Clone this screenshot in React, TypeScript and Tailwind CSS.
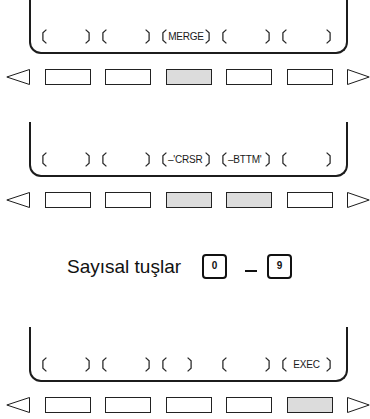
type Pair = { label?: string; w?: number; left?: boolean };

const ink = "border-[#1c1c1c]";

function HalfBracket({ flip }: { flip?: boolean }) {
  return (
    <svg width="5" height="15" viewBox="0 0 5 15" className="shrink-0">
      <path
        d={flip ? "M0.6 0.6 L4.1 3.8 L4.1 11.2 L0.6 14.4" : "M4.4 0.6 L0.9 3.8 L0.9 11.2 L4.4 14.4"}
        fill="none"
        stroke="#262626"
        strokeWidth="1.25"
      />
    </svg>
  );
}

function BracketRow({ pairs }: { pairs: Pair[] }) {
  return (
    <div className="grid grid-cols-[48px_48px_48px_48px_49px] gap-x-[12px] pl-[11px]">
      {pairs.map((p, i) => (
        <div
          key={i}
          className={`flex h-[15px] items-center ${p.left ? "justify-start" : "justify-between"}`}
          style={p.w ? { width: p.w } : undefined}
        >
          <HalfBracket />
          {p.label && (
            <span
              className={`text-[10px] leading-none tracking-[-0.2px] text-[#1a1a1a] ${
                p.left ? "ml-[1px]" : ""
              }`}
            >
              {p.label}
            </span>
          )}
          <span className={p.left ? "ml-auto flex" : "flex"}>
            <HalfBracket flip />
          </span>
        </div>
      ))}
    </div>
  );
}

function Screen({ pairs, top = true }: { pairs: Pair[]; top?: boolean }) {
  return (
    <div
      className={`ml-[29px] flex w-[319px] flex-col justify-end rounded-b-[12px] border-x-2 border-b-2 ${ink} pb-[8px] ${
        top ? "h-[54px]" : "h-[55px]"
      }`}
    >
      <BracketRow pairs={pairs} />
    </div>
  );
}

function SoftKeys({ lit }: { lit: number[] }) {
  return (
    <div className="flex h-[16px] items-center gap-[14.5px] pl-[6px]">
      <svg width="24" height="16" viewBox="0 0 24 16" className="shrink-0">
        <polygon points="23.5,0.5 0.8,8 23.5,15.5" fill="none" stroke="#1c1c1c" strokeWidth="1" />
      </svg>
      {[0, 1, 2, 3, 4].map((i) => (
        <div
          key={i}
          className={`h-[16px] w-[46px] shrink-0 border border-[#222] ${
            lit.includes(i) ? "bg-[#dcdcdc]" : "bg-white"
          }`}
        />
      ))}
      <svg width="23" height="16" viewBox="0 0 23 16" className="shrink-0">
        <polygon points="0.5,0.5 22.2,8 0.5,15.5" fill="none" stroke="#1c1c1c" strokeWidth="1" />
      </svg>
    </div>
  );
}

function Key({ children }: { children: string }) {
  return (
    <div className="flex h-[25px] w-[25px] items-center justify-center rounded-[4px] border-2 border-[#111] text-[10px] font-bold leading-none text-[#111]">
      {children}
    </div>
  );
}

export default function App() {
  return (
    <div className="h-[419px] w-[370px] overflow-hidden bg-white [font-family:'Liberation_Sans',Arial,sans-serif]">
      <Screen pairs={[{}, {}, { label: "MERGE" }, {}, {}]} />
      <div className="mt-[15px]">
        <SoftKeys lit={[2]} />
      </div>

      <div className="mt-[37px]">
        <Screen
          top={false}
          pairs={[{}, {}, { label: "–'CRSR", left: true }, { label: "–BTTM'", left: true }, {}]}
        />
      </div>
      <div className="mt-[15px]">
        <SoftKeys lit={[2, 3]} />
      </div>

      <div className="mt-[45px] flex h-[26px] items-center pl-[67px]">
        <span className="text-[19px] leading-none text-[#111]">Sayısal tuşlar</span>
        <div className="ml-[21px]">
          <Key>0</Key>
        </div>
        <div className="ml-[18px] mt-[9px] h-[2px] w-[12px] bg-[#111]" />
        <div className="ml-[10px]">
          <Key>9</Key>
        </div>
      </div>

      <div className="mt-[48px]">
        <Screen top={false} pairs={[{}, {}, { w: 30 }, {}, { label: "EXEC" }]} />
      </div>
      <div className="mt-[15px]">
        <SoftKeys lit={[4]} />
      </div>
    </div>
  );
}
